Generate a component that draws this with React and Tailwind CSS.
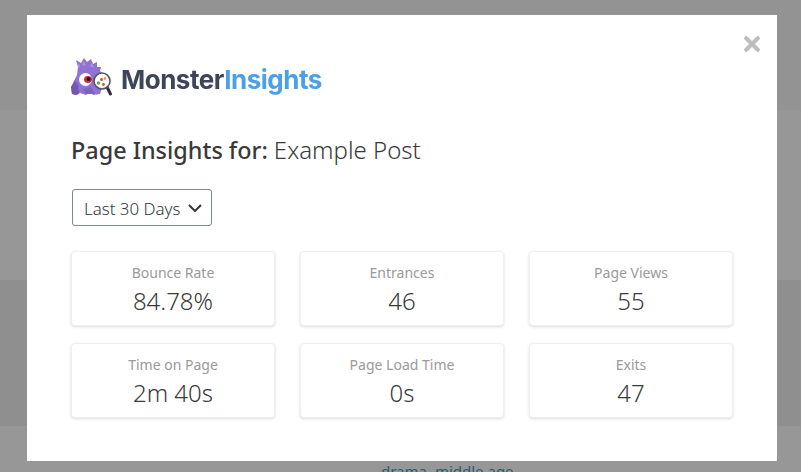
const stats = [
  { label: 'Bounce Rate', value: '84.78%' },
  { label: 'Entrances', value: '46' },
  { label: 'Page Views', value: '55' },
  { label: 'Time on Page', value: '2m 40s' },
  { label: 'Page Load Time', value: '0s' },
  { label: 'Exits', value: '47' },
];

function MonsterIcon() {
  return (
    <svg width="42" height="40" viewBox="0 0 42 40" className="shrink-0">
      {/* body with spikes */}
      <path
        d="M1 37 L0 30 L3 24 L6 18 L7 10 L5 3 L10 6 L13 1 L16 5 L20 2 L22 7 L26 5 L26 10 L30 10 L29 14 L32 17 L32 28 L30 34 L29 37 L22 38 L20 35 L15 38 L9 36 L6 38 Z"
        fill="#8f72d2"
      />
      <path d="M1 37 L0 30 L4 24 L7 28 L8 36 L5 38 Z" fill="#7456b4" />
      <path d="M11 8 L13 4 L15 9 Z M19 9 L21 6 L23 11 Z M6 6 L9 8 L8 12 Z" fill="#ab95e2" />
      <path d="M12 32 L20 30 L24 37 L15 37 Z" fill="#7f62c2" />
      {/* eye */}
      <circle cx="14.5" cy="22.5" r="6.5" fill="#ffffff" />
      <ellipse cx="17" cy="22.5" rx="4" ry="3.4" fill="#d8283c" />
      <circle cx="17.5" cy="22" r="2" fill="#1c1c28" />
      {/* magnifying glass */}
      <path d="M36 30 L39.5 37" stroke="#2f2f3d" strokeWidth="3" strokeLinecap="round" />
      <circle cx="31" cy="24" r="8" fill="#ffffff" stroke="#55555f" strokeWidth="1.6" />
      <circle cx="27.5" cy="26" r="1.7" fill="#4caf50" />
      <circle cx="30.5" cy="22.5" r="1.5" fill="#e8483f" />
      <circle cx="34" cy="21.5" r="1.4" fill="#f0a030" />
      <circle cx="32.5" cy="27.5" r="1.4" fill="#e8483f" />
    </svg>
  );
}

function StatCard({ label, value }) {
  return (
    <div className="h-[75px] rounded-[4px] border border-[#f0f0f0] bg-white pt-[11px] text-center shadow-[0_1px_3px_rgba(0,0,0,0.14)]">
      <div className="text-[14px] leading-[20px] text-[#9a9a9a]">{label}</div>
      <div className="text-[24px] font-light leading-[36px] text-[#3a3a3a]">{value}</div>
    </div>
  );
}

export default function App() {
  return (
    <div className="relative flex h-[472px] w-[801px] flex-col overflow-hidden font-['Noto_Sans',sans-serif]">
      {/* dimmed page behind the modal */}
      <div className="h-[110px] bg-[#939393]" />
      <div className="h-[170px] bg-[#979797]" />
      <div className="h-[146px] bg-[#8f8f8f]" />
      <div className="h-[46px] bg-[#979797] pl-[381px] pt-[35px] text-[15px] leading-[20px] text-[#1d5f7c]">
        drama, middle age
      </div>

      <div className="absolute left-[27px] top-[15px] h-[446px] w-[750px] bg-white px-[44px] pt-[42px]">
        <button className="absolute right-[15px] top-[19px] text-[#bdbdbd]">
          <svg width="20" height="20" viewBox="0 0 20 20">
            <path d="M3 3 L17 17 M17 3 L3 17" stroke="currentColor" strokeWidth="4" />
          </svg>
        </button>

        <div className="flex h-[40px] items-center">
          <MonsterIcon />
          <div className="ml-[8px] pt-[6px] font-['Inter',sans-serif] text-[26px] font-bold leading-[40px] tracking-[-0.5px] blur-[0.4px]">
            <span className="text-[#3d4658]">Monster</span>
            <span className="text-[#4ca0e8]">Insights</span>
          </div>
        </div>

        <h1 className="mt-[36px] text-[23.4px] leading-[34px] text-[#393939]">
          <span className="font-medium">Page Insights for:</span> <span className="text-[24px] font-light">Example Post</span>
        </h1>

        <button className="ml-px mt-[22px] flex h-[37px] w-[140px] items-center rounded-[3px] border border-[#7e8993] bg-white pl-[11px] text-[16.9px] font-light text-[#32373c]">
          <span className="pt-[3px]">Last 30 Days</span>
          <svg width="14" height="8" viewBox="0 0 14 8" className="ml-[8px]">
            <path d="M1 1 L7 7 L13 1" fill="none" stroke="#32373c" strokeWidth="2" />
          </svg>
        </button>

        <div className="mt-[25px] grid grid-cols-3 gap-x-[25px] gap-y-[17px]">
          {stats.map((stat) => (
            <StatCard key={stat.label} label={stat.label} value={stat.value} />
          ))}
        </div>
      </div>
    </div>
  );
}
